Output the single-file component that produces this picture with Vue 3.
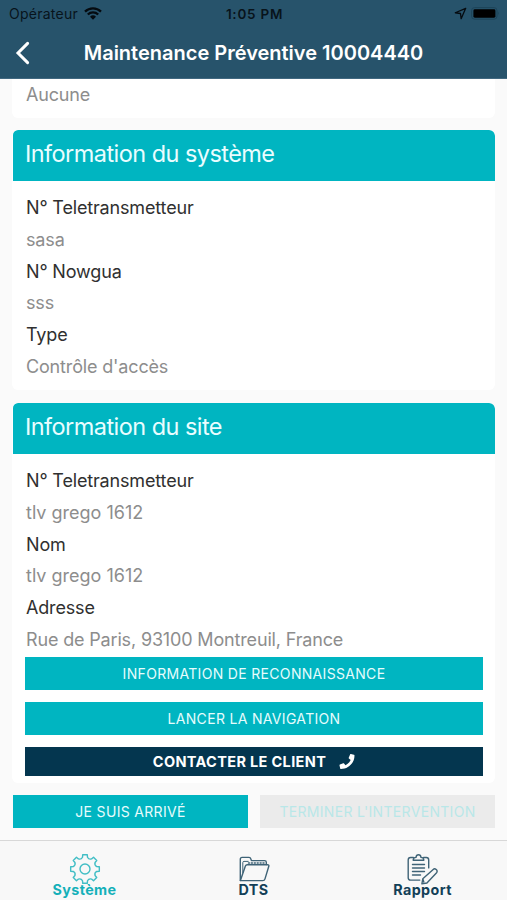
<script setup>
import { ref } from 'vue'

const systemRows = [
  { label: 'N° Teletransmetteur', value: 'sasa' },
  { label: 'N° Nowgua', value: 'sss' },
  { label: 'Type', value: "Contrôle d'accès" },
]
const siteRows = [
  { label: 'N° Teletransmetteur', value: 'tlv grego 1612' },
  { label: 'Nom', value: 'tlv grego 1612' },
  { label: 'Adresse', value: 'Rue de Paris, 93100 Montreuil, France' },
]
const tabs = [
  { id: 'systeme', label: 'Système' },
  { id: 'dts', label: 'DTS' },
  { id: 'rapport', label: 'Rapport' },
]
const current = ref('systeme')

// eight-tooth cog outline around (16,16)
function cog() {
  const pt = (r, deg) => {
    const a = (deg * Math.PI) / 180
    return `${(16 + r * Math.cos(a)).toFixed(2)} ${(16 + r * Math.sin(a)).toFixed(2)}`
  }
  let d = ''
  for (let i = 0; i < 8; i++) {
    const a = i * 45 - 90
    d += `${i ? 'L' : 'M'}${pt(12, a - 12)}L${pt(14.5, a - 9)}L${pt(14.5, a + 9)}L${pt(12, a + 12)}Q${pt(10, a + 22.5)} ${pt(12, a + 33)}`
  }
  return d + 'Z'
}
const cogPath = cog()
</script>

<template>
  <div class="screen">
    <header class="top">
      <div class="status">
        <div class="status-left">
          <span class="carrier">Opérateur</span>
          <svg class="wifi" viewBox="0 0 18 13" aria-hidden="true">
            <path d="M1 4.6a11.6 11.6 0 0 1 16 0M3.8 7.5a7.5 7.5 0 0 1 10.4 0" fill="none" stroke="#050b10" stroke-width="2.3" />
            <path d="M9 12.7 6 9.7a4.3 4.3 0 0 1 6 0z" fill="#050b10" />
          </svg>
        </div>
        <span class="clock">1:05 PM</span>
        <div class="status-right">
          <svg class="loc" viewBox="0 0 12 12" aria-hidden="true">
            <path d="M10.8 1.2 1.2 5.3l4.8.7.6 4.8z" fill="none" stroke="#050b10" stroke-width="1.2" stroke-linejoin="round" />
          </svg>
          <svg class="battery" viewBox="0 0 29 13" aria-hidden="true">
            <rect x=".6" y=".6" width="25.4" height="11.6" rx="3" fill="none" stroke="#1d4459" stroke-width="1" />
            <rect x="2.4" y="2.3" width="22" height="8.4" rx="1.4" fill="#000" />
            <path d="M27.3 4.6q1.4 1.8 0 3.6z" fill="#1d4459" />
          </svg>
        </div>
      </div>
      <div class="nav">
        <button class="back" type="button" aria-label="Retour">
          <svg viewBox="0 0 16 26"><path d="M12.6 3.4 3 13l9.6 9.6" fill="none" stroke="#fff" stroke-width="3" stroke-linecap="round" /></svg>
        </button>
        <h1 class="title">Maintenance Préventive 10004440</h1>
      </div>
    </header>

    <main class="content">
      <section class="card card-cut">
        <div class="value">Aucune</div>
      </section>

      <section class="card">
        <h2 class="card-head">Information du système</h2>
        <div class="rows">
          <template v-for="row in systemRows" :key="row.label">
            <div class="label">{{ row.label }}</div>
            <div class="value">{{ row.value }}</div>
          </template>
        </div>
      </section>

      <section class="card card-site">
        <h2 class="card-head">Information du site</h2>
        <div class="rows">
          <template v-for="row in siteRows" :key="row.label">
            <div class="label">{{ row.label }}</div>
            <div class="value" :class="{ ref: row.value.startsWith('tlv') }">{{ row.value }}</div>
          </template>
        </div>
        <div class="actions">
          <button class="btn" type="button">INFORMATION DE RECONNAISSANCE</button>
          <button class="btn" type="button">LANCER LA NAVIGATION</button>
          <button class="btn btn-dark" type="button">
            <span>CONTACTER LE CLIENT</span>
            <svg class="phone" viewBox="0 0 512 512" aria-hidden="true">
              <path fill="#fff" d="M493.4 24.6l-104-24c-11.3-2.6-22.9 3.3-27.5 13.9l-48 112c-4.2 9.8-1.4 21.3 6.9 28l60.6 49.6c-36 76.7-98.9 140.5-177.2 177.2l-49.6-60.6c-6.8-8.3-18.2-11.1-28-6.9l-112 48C3.9 366.5-2 378.1.6 389.4l24 104C27.1 504.2 36.7 512 48 512c256.1 0 464-207.5 464-464 0-11.2-7.7-20.9-18.6-23.4z" />
            </svg>
          </button>
        </div>
      </section>

      <div class="footer-actions">
        <button class="btn" type="button">JE SUIS ARRIVÉ</button>
        <button class="btn btn-off" type="button" disabled>TERMINER L'INTERVENTION</button>
      </div>
    </main>

    <nav class="tabs">
      <button v-for="tab in tabs" :key="tab.id" type="button" class="tab" :class="[tab.id, { active: current === tab.id }]" @click="current = tab.id">
        <svg class="tab-icon" viewBox="0 0 32 32" fill="none" stroke="currentColor" stroke-width="1.4" stroke-linejoin="round" stroke-linecap="round" aria-hidden="true">
          <template v-if="tab.id === 'systeme'">
            <path :d="cogPath" />
            <circle cx="16" cy="16" r="5" />
          </template>
          <template v-else-if="tab.id === 'dts'">
            <path d="M2.3 27.6V6.2Q2.3 4.4 4.1 4.4H11q1.4 0 1.8 1.4l.6 1.8h13.2q1.7 0 1.7 1.7v2.3" />
            <path d="M2.4 27.6 7.4 13q.5-1.3 1.8-1.3h20.3q1.7 0 1.3 1.6l-3.8 12.6q-.5 1.7-2.2 1.7z" />
            <path d="M4.8 19.5V9.6q0-1.2 1.2-1.2h4.2" stroke-width="1" />
            <path d="M10.5 9.9h16.4" stroke-dasharray="1 1.9" stroke-width="1.5" />
          </template>
          <template v-else>
            <path d="M7.4 4.5H4.6Q2.2 4.5 2.2 6.9v17.8q0 2.4 2.4 2.4h9.2M17.6 4.5h2.7q2.4 0 2.4 2.4v8" />
            <path d="M7.2 7.3q0-2.8 2.8-2.9Q10.3 1.7 12.5 1.7T15 4.4q2.8.1 2.8 2.9z" />
            <path d="M6.5 11.5h12M6.5 15h12M6.5 18.5h12M6.5 22h8" />
            <path d="m16.8 25.8 10.4-9.4q1.4-1.3 3 .2t.4 3.1L20.9 30l-5 .9zM16.8 25.8l1 3.2" />
          </template>
        </svg>
        <span class="tab-label">{{ tab.label }}</span>
      </button>
    </nav>
  </div>
</template>

<style>
body { margin: 0; background: #fafafa; }
</style>

<style scoped>
.screen { width: 507px; height: 900px; display: flex; flex-direction: column; overflow: hidden; background: #fafafa; font-family: Inter, "Liberation Sans", sans-serif; color: #303030 }
button { appearance: none; border: 0; padding: 0; margin: 0; background: transparent; font-family: inherit; cursor: pointer }
h1, h2 { margin: 0 }
span, div { white-space: nowrap }

.top { flex: none; height: 79px; background: #27536b; box-sizing: border-box; border-bottom: 1px solid #416880 }
.status { display: grid; grid-template-columns: 1fr auto 1fr; align-items: center; height: 27px; padding: 0 7px 0 9px; color: #08131b }
.status-left { display: flex; align-items: center; gap: 6px; font-size: 14px; letter-spacing: .25px }
.wifi { width: 18px; height: 13px; display: block }
.clock { font-size: 13.5px; font-weight: 600; letter-spacing: .75px }
.status-right { display: flex; justify-content: flex-end; align-items: center; gap: 4px }
.loc { width: 13px; height: 13px }
.battery { width: 29px; height: 13px }
.nav { display: grid; grid-template-columns: 50px 1fr 50px; align-items: center; height: 51px }
.back { width: 16px; height: 26px; margin-left: 15px }
.back svg { display: block; width: 16px; height: 26px }
.title { font-size: 20px; line-height: 24px; font-weight: 600; color: #fff; text-align: center; white-space: nowrap }

.content { flex: none; height: 761px; box-sizing: border-box; padding: 0 12px }
.card { background: #fff; border-radius: 6px; margin-bottom: 12px; overflow: hidden; height: 260px }
.card-cut { height: 39px; padding-left: 14px; border-radius: 0 0 6px 6px }
.card-site { height: 380px; margin-top: 13px }
.card-head { height: 51px; box-sizing: border-box; margin-left: 1px; padding: 9px 0 0 12px; background: #00b5c1; color: #e9fdff; font-size: 23.5px; line-height: 30px; letter-spacing: -.55px; font-weight: 400; border-radius: 5px 5px 0 0 }
.rows { padding: 11px 0 0 14px }
.label, .value { height: 31.75px; line-height: 31.75px; font-size: 18px; letter-spacing: -.16px }
.value { color: #8d8d8d }
.value.ref { letter-spacing: 0 }
.actions { display: flex; flex-direction: column; gap: 12px; padding: 1.5px 12px 0 13px }
.btn { display: flex; align-items: center; justify-content: center; height: 33px; background: #00b5c1; color: #e6fcfd; font-size: 14px; letter-spacing: .32px }
.btn-dark { height: 29px; gap: 13px; background: #04364f; color: #fff; font-size: 14.5px; font-weight: 700; letter-spacing: .35px }
.phone { width: 16px; height: 15px }
.footer-actions { display: grid; grid-template-columns: 1fr 1fr; gap: 12px; padding: 0 0 0 1px }
.btn-off { background: #ebebeb; color: #b9e7e8 }

.tabs { flex: none; height: 60px; box-sizing: border-box; border-top: 1px solid #d8d8d8; display: grid; grid-template-columns: repeat(3, 1fr); background: #f8f8f8 }
.tab { display: flex; flex-direction: column; align-items: center; padding-top: 12px; color: #123f57 }
.tab-icon { width: 32px; height: 32px; flex: none; opacity: .8 }
.rapport .tab-icon { margin-left: -2px }
.tab-label { margin-top: -4px; font-size: 14.3px; line-height: 18px; font-weight: 700; letter-spacing: .4px }
.tab.active { color: #14b0b9 }
</style>
